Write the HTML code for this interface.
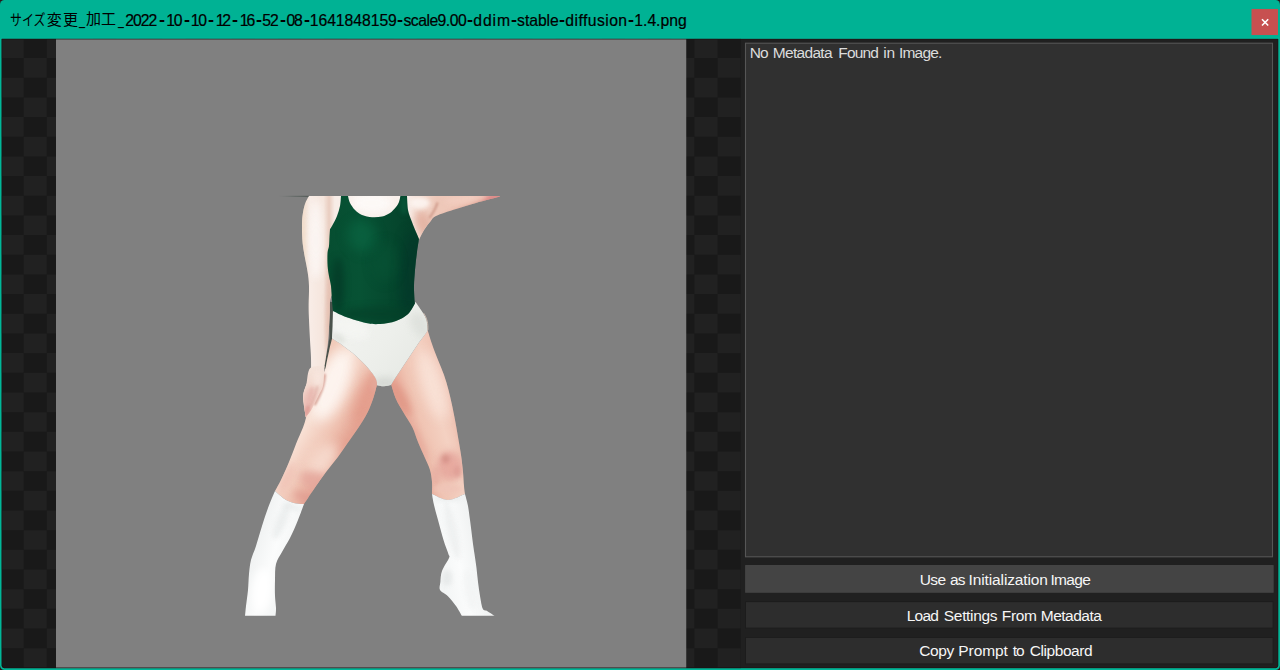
<!DOCTYPE html>
<html lang="ja"><head><meta charset="utf-8"><title>Image Viewer</title>
<style>
html,body{margin:0;padding:0;}
body{width:1280px;height:670px;overflow:hidden;background:#2a1719;position:relative;color:#000;
 font-family:"Liberation Sans","Noto Sans CJK JP",sans-serif;}
.fig{position:absolute;left:0;top:0;}
.t{position:absolute;white-space:pre;line-height:20px;margin:0;padding:0;}
.k{-webkit-text-stroke:0.2px #000;}
.g{position:absolute;left:0;top:0;width:0;height:0;font-size:15.5px;}
.ttl{font-size:15.75px;}
.meta{color:#dcdcdc;}
.btn{color:#f6f6f6;}
</style></head>
<body>

<svg class="fig" width="1280" height="670" viewBox="0 0 1280 670">
 <defs><clipPath id="cc"><path d="M1.5,38.75H1278.4V665.2a3,3 0 0 1 -3,3H4.5a3,3 0 0 1 -3,-3Z"/></clipPath></defs>
 <rect width="1280" height="670" fill="#2a1719"/>
 <rect width="1280" height="670" rx="4.5" fill="#00b294"/>
 <g clip-path="url(#cc)">
  <rect x="0" y="38" width="1280" height="632" fill="#202020"/>
  <rect x="0" y="38" width="741" height="632" fill="#191919"/>
  <path d="M0.55,48.23H741 M0.55,87.58H741 M0.55,126.92H741 M0.55,166.26H741 M0.55,205.60H741 M0.55,244.94H741 M0.55,284.28H741 M0.55,323.62H741 M0.55,362.95H741 M0.55,402.30H741 M0.55,441.63H741 M0.55,480.98H741 M0.55,520.32H741 M0.55,559.65H741 M0.55,599.00H741 M0.55,638.34H741" stroke="#212121" stroke-width="19.67" stroke-dasharray="23.13" fill="none"/>
  <path d="M0.55,67.91H741 M0.55,107.25H741 M0.55,146.59H741 M0.55,185.93H741 M0.55,225.27H741 M0.55,264.61H741 M0.55,303.94H741 M0.55,343.29H741 M0.55,382.62H741 M0.55,421.97H741 M0.55,461.31H741 M0.55,500.65H741 M0.55,539.99H741 M0.55,579.33H741 M0.55,618.67H741 M0.55,658.00H741" stroke="#212121" stroke-width="19.67" stroke-dasharray="23.13" stroke-dashoffset="23.13" fill="none"/>
  <rect x="56" y="38" width="630.25" height="632" fill="#808080"/>
  <rect x="745.5" y="43.2" width="527" height="513.6" fill="#303030" stroke="#565656" stroke-width="1.1"/>
  <rect x="745.2" y="565.1" width="528.4" height="27.6" fill="#494949"/><rect x="746" y="565.9" width="526.8" height="26" fill="#444"/>
  <rect x="745.1" y="601.2" width="528.4" height="27.3" fill="#1c1c1c"/><rect x="746" y="602.1" width="526.6" height="25.5" fill="#2d2d2d"/>
  <rect x="745.1" y="637" width="528.4" height="27.3" fill="#1c1c1c"/><rect x="746" y="637.9" width="526.6" height="25.5" fill="#2d2d2d"/>
 </g>
 <path d="M1.9,39.1H1278V665.2a2.6,2.6 0 0 1 -2.6,2.6H4.5a2.6,2.6 0 0 1 -2.6,-2.6Z" fill="none" stroke="#1f1013" stroke-width="0.8" opacity=".85"/>
 <path d="M1.1,38.3H1278.8V665.4a3.4,3.4 0 0 1 -3.4,3.4H4.5a3.4,3.4 0 0 1 -3.4,-3.4Z" fill="none" stroke="#00c6a4" stroke-width="0.8" opacity=".8"/>
 <rect x="1251.5" y="8.95" width="26.5" height="26.1" fill="#c75050"/>
 <path d="M1262,19.3 L1268.2,25.5 M1268.2,19.3 L1262,25.5" stroke="#fff" stroke-width="1.6" fill="none"/>
</svg>

<svg class="fig" width="1280" height="670" viewBox="0 0 1280 670">
<defs>
 <filter id="sf" color-interpolation-filters="sRGB" x="-5%" y="-5%" width="110%" height="110%"><feGaussianBlur stdDeviation="0.5"/></filter>
 <filter id="b1" color-interpolation-filters="sRGB" x="-100%" y="-100%" width="300%" height="300%"><feGaussianBlur stdDeviation="0.9"/></filter>
 <filter id="b2" color-interpolation-filters="sRGB" x="-100%" y="-100%" width="300%" height="300%"><feGaussianBlur stdDeviation="2"/></filter>
 <filter id="b3" color-interpolation-filters="sRGB" x="-100%" y="-100%" width="300%" height="300%"><feGaussianBlur stdDeviation="3.5"/></filter>
 <filter id="b5" color-interpolation-filters="sRGB" x="-100%" y="-100%" width="300%" height="300%"><feGaussianBlur stdDeviation="6"/></filter>
 <linearGradient id="gArm" x1="302" x2="345" y1="0" y2="0" gradientUnits="userSpaceOnUse">
  <stop offset="0" stop-color="#f1dfd2"/><stop offset=".2" stop-color="#f8ece6"/><stop offset=".5" stop-color="#f5e5dc"/><stop offset=".63" stop-color="#e9cdc0"/><stop offset=".76" stop-color="#f7ece6"/><stop offset="1" stop-color="#f8efea"/></linearGradient>
 <linearGradient id="gLine" x1="279" x2="309" y1="0" y2="0" gradientUnits="userSpaceOnUse"><stop offset="0" stop-color="#5a6660" stop-opacity="0"/><stop offset=".5" stop-color="#4a5650" stop-opacity=".6"/><stop offset="1" stop-color="#39453f" stop-opacity=".85"/></linearGradient>
 <linearGradient id="gHand" x1="0" x2="0" y1="366" y2="417" gradientUnits="userSpaceOnUse">
  <stop offset="0" stop-color="#f5e5dc"/><stop offset=".3" stop-color="#f4dcd2"/><stop offset="1" stop-color="#efc7bd"/></linearGradient>
 <linearGradient id="gTorso" x1="330" x2="500" y1="0" y2="0" gradientUnits="userSpaceOnUse">
  <stop offset="0" stop-color="#f8efea"/><stop offset=".45" stop-color="#faf1ec"/><stop offset=".53" stop-color="#f2d8cc"/><stop offset=".63" stop-color="#eec8b9"/><stop offset=".82" stop-color="#f0c8b9"/><stop offset="1" stop-color="#de9690"/></linearGradient>
 <linearGradient id="gLeo" x1="328" x2="420" y1="0" y2="0" gradientUnits="userSpaceOnUse">
  <stop offset="0" stop-color="#064e31"/><stop offset=".35" stop-color="#075234"/><stop offset=".75" stop-color="#05462d"/><stop offset="1" stop-color="#043d28"/></linearGradient>
 <linearGradient id="gPants" x1="331" x2="428" y1="310" y2="386" gradientUnits="userSpaceOnUse">
  <stop offset="0" stop-color="#f3f4f1"/><stop offset=".5" stop-color="#edefeb"/><stop offset="1" stop-color="#e4e7e2"/></linearGradient>
 <linearGradient id="gThL" x1="300" x2="352" y1="400" y2="432" gradientUnits="userSpaceOnUse">
  <stop offset="0" stop-color="#f1cab9"/><stop offset=".3" stop-color="#f8e0d4"/><stop offset=".65" stop-color="#f1c8b8"/><stop offset="1" stop-color="#e7a896"/></linearGradient>
 <linearGradient id="gThR" x1="404" x2="458" y1="424" y2="408" gradientUnits="userSpaceOnUse">
  <stop offset="0" stop-color="#e7a695"/><stop offset=".3" stop-color="#f0c4b3"/><stop offset=".65" stop-color="#f4d1c2"/><stop offset="1" stop-color="#eec0b0"/></linearGradient>
 <linearGradient id="gBL" x1="250" x2="290" y1="560" y2="572" gradientUnits="userSpaceOnUse">
  <stop offset="0" stop-color="#f0f2f2"/><stop offset=".5" stop-color="#fbfcfc"/><stop offset="1" stop-color="#f2f4f4"/></linearGradient>
 <linearGradient id="gBR" x1="438" x2="478" y1="560" y2="552" gradientUnits="userSpaceOnUse">
  <stop offset="0" stop-color="#f3f5f5"/><stop offset=".5" stop-color="#fbfcfc"/><stop offset="1" stop-color="#f0f2f2"/></linearGradient>
</defs>
<g filter="url(#sf)">
 <path d="M279,196.3 L309,196.3" stroke="url(#gLine)" stroke-width="0.9"/>
 <clipPath id="cto"><path d="M330.0,196.0 C358.3,196.0 471.7,196.0 500.0,196.0 C500.0,196.1 500.0,196.5 500.0,196.6 C496.0,197.7 483.3,200.9 476.0,203.0 C468.7,205.1 462.7,206.8 456.0,209.0 C449.3,211.2 440.3,213.8 436.0,216.0 C431.7,218.2 432.0,219.7 430.0,222.0 C428.0,224.3 425.8,227.2 424.0,230.0 C422.2,232.8 420.2,237.5 419.5,239.0 C417.9,241.2 411.6,249.8 410.0,252.0 C396.7,251.7 343.3,250.3 330.0,250.0 C330.0,241.0 330.0,205.0 330.0,196.0Z"/></clipPath><path d="M330.0,196.0 C358.3,196.0 471.7,196.0 500.0,196.0 C500.0,196.1 500.0,196.5 500.0,196.6 C496.0,197.7 483.3,200.9 476.0,203.0 C468.7,205.1 462.7,206.8 456.0,209.0 C449.3,211.2 440.3,213.8 436.0,216.0 C431.7,218.2 432.0,219.7 430.0,222.0 C428.0,224.3 425.8,227.2 424.0,230.0 C422.2,232.8 420.2,237.5 419.5,239.0 C417.9,241.2 411.6,249.8 410.0,252.0 C396.7,251.7 343.3,250.3 330.0,250.0 C330.0,241.0 330.0,205.0 330.0,196.0Z" fill="url(#gTorso)"/><g clip-path="url(#cto)"><ellipse cx="424" cy="224" rx="8" ry="14" fill="#e4b3a3" opacity="0.95" filter="url(#b3)" transform="rotate(-20 424 224)"/><ellipse cx="372" cy="203" rx="20" ry="10" fill="#fdfaf8" opacity="0.9" filter="url(#b3)" transform="rotate(0 372 203)"/><ellipse cx="420" cy="203" rx="10" ry="6" fill="#fcf5f1" opacity="0.9" filter="url(#b2)" transform="rotate(0 420 203)"/><ellipse cx="468" cy="209" rx="30" ry="3" fill="#d99888" opacity="0.9" filter="url(#b2)" transform="rotate(-19 468 209)"/><ellipse cx="492" cy="198" rx="10" ry="3" fill="#dc8686" opacity="0.9" filter="url(#b2)" transform="rotate(-22 492 198)"/><ellipse cx="465" cy="199" rx="22" ry="3" fill="#f3cfc2" opacity="0.8" filter="url(#b2)" transform="rotate(-8 465 199)"/><path d="M437.5,202.5 C436,208 433,213 429.5,218" stroke="#c48b7b" stroke-width="2" fill="none" opacity=".8" filter="url(#b1)"/></g>
 <path d="M331.3,302 L331.2,338 C329.5,350 327,360 325,369" stroke="#4a524b" stroke-width="3.4" fill="none"/>
 <clipPath id="car"><path d="M309.0,196.0 C308.3,197.3 306.1,200.7 305.0,204.0 C303.9,207.3 303.0,212.3 302.5,216.0 C302.0,219.7 302.1,222.7 302.0,226.0 C301.9,229.3 302.0,232.7 302.2,236.0 C302.4,239.3 302.5,242.3 303.0,246.0 C303.5,249.7 304.2,253.7 305.0,258.0 C305.8,262.3 306.9,267.3 307.6,272.0 C308.3,276.7 308.8,280.3 309.0,286.0 C309.2,291.7 308.6,300.3 308.6,306.0 C308.6,311.7 308.8,314.3 309.0,320.0 C309.2,325.7 309.7,333.7 310.0,340.0 C310.3,346.3 310.9,352.2 311.0,358.0 C311.1,363.8 311.3,370.4 310.5,375.0 C309.7,379.6 307.2,382.0 306.0,385.5 C304.8,389.0 303.3,392.2 303.0,396.0 C302.7,399.8 303.8,404.3 304.3,408.0 C304.8,411.7 305.7,416.3 306.0,418.0 C306.7,417.0 308.8,414.2 310.0,412.0 C311.2,409.8 311.8,407.9 313.5,405.0 C315.2,402.1 318.3,398.5 320.0,394.5 C321.7,390.5 322.9,385.2 323.6,381.0 C324.3,376.8 323.8,373.0 324.2,369.0 C324.6,365.0 325.4,361.5 326.0,357.0 C326.6,352.5 327.5,347.0 328.0,342.0 C328.5,337.0 328.7,332.0 329.0,327.0 C329.3,322.0 329.6,316.5 329.8,312.0 C330.0,307.5 329.5,303.7 330.2,300.0 C330.9,296.3 333.4,291.7 334.0,290.0 C335.8,280.3 343.2,241.7 345.0,232.0 C344.9,226.0 344.6,202.0 344.5,196.0 C338.6,196.0 314.9,196.0 309.0,196.0Z"/></clipPath><path d="M309.0,196.0 C308.3,197.3 306.1,200.7 305.0,204.0 C303.9,207.3 303.0,212.3 302.5,216.0 C302.0,219.7 302.1,222.7 302.0,226.0 C301.9,229.3 302.0,232.7 302.2,236.0 C302.4,239.3 302.5,242.3 303.0,246.0 C303.5,249.7 304.2,253.7 305.0,258.0 C305.8,262.3 306.9,267.3 307.6,272.0 C308.3,276.7 308.8,280.3 309.0,286.0 C309.2,291.7 308.6,300.3 308.6,306.0 C308.6,311.7 308.8,314.3 309.0,320.0 C309.2,325.7 309.7,333.7 310.0,340.0 C310.3,346.3 310.9,352.2 311.0,358.0 C311.1,363.8 311.3,370.4 310.5,375.0 C309.7,379.6 307.2,382.0 306.0,385.5 C304.8,389.0 303.3,392.2 303.0,396.0 C302.7,399.8 303.8,404.3 304.3,408.0 C304.8,411.7 305.7,416.3 306.0,418.0 C306.7,417.0 308.8,414.2 310.0,412.0 C311.2,409.8 311.8,407.9 313.5,405.0 C315.2,402.1 318.3,398.5 320.0,394.5 C321.7,390.5 322.9,385.2 323.6,381.0 C324.3,376.8 323.8,373.0 324.2,369.0 C324.6,365.0 325.4,361.5 326.0,357.0 C326.6,352.5 327.5,347.0 328.0,342.0 C328.5,337.0 328.7,332.0 329.0,327.0 C329.3,322.0 329.6,316.5 329.8,312.0 C330.0,307.5 329.5,303.7 330.2,300.0 C330.9,296.3 333.4,291.7 334.0,290.0 C335.8,280.3 343.2,241.7 345.0,232.0 C344.9,226.0 344.6,202.0 344.5,196.0 C338.6,196.0 314.9,196.0 309.0,196.0Z" fill="url(#gArm)"/><g clip-path="url(#car)"><ellipse cx="303" cy="250" rx="3" ry="60" fill="#f2dcc8" opacity="0.8" filter="url(#b2)" transform="rotate(0 303 250)"/><ellipse cx="330" cy="300" rx="3.5" ry="50" fill="#e4bfb0" opacity="0.9" filter="url(#b2)" transform="rotate(2 330 300)"/><ellipse cx="311" cy="400" rx="7" ry="14" fill="#ecbfb6" opacity="0.9" filter="url(#b3)" transform="rotate(20 311 400)"/><ellipse cx="307" cy="412" rx="4" ry="7" fill="#e3a49c" opacity="0.9" filter="url(#b2)" transform="rotate(20 307 412)"/><ellipse cx="316" cy="240" rx="7" ry="40" fill="#fcf8f6" opacity="0.8" filter="url(#b3)" transform="rotate(0 316 240)"/></g>
 <clipPath id="ctr"><path d="M427.6,330.0 C428.3,332.3 430.3,339.0 432.0,344.0 C433.7,349.0 436.0,354.8 438.0,360.0 C440.0,365.2 442.2,370.0 444.0,375.0 C445.8,380.0 447.2,385.0 448.5,390.0 C449.8,395.0 450.9,400.0 452.0,405.0 C453.1,410.0 454.0,414.7 455.0,420.0 C456.0,425.3 457.0,431.2 458.0,437.0 C459.0,442.8 460.2,449.2 461.0,455.0 C461.8,460.8 462.5,466.8 463.0,472.0 C463.5,477.2 463.7,482.3 464.0,486.0 C464.3,489.7 464.8,492.7 465.0,494.0 C462.2,495.0 453.5,500.0 448.0,500.0 C442.5,500.0 434.7,495.0 432.0,494.0 C432.0,492.0 432.3,486.0 432.0,482.0 C431.7,478.0 431.2,474.0 430.0,470.0 C428.8,466.0 427.0,462.7 425.0,458.0 C423.0,453.3 420.1,447.1 418.0,442.0 C415.9,436.9 414.9,432.4 412.5,427.5 C410.1,422.6 406.2,417.2 403.5,412.5 C400.8,407.8 398.0,403.6 396.0,399.0 C394.0,394.4 392.1,387.3 391.3,385.0 C391.8,384.2 392.2,382.8 394.0,380.0 C395.8,377.2 399.3,372.0 402.0,368.0 C404.7,364.0 407.3,360.0 410.0,356.0 C412.7,352.0 415.3,347.8 418.0,344.0 C420.7,340.2 424.4,335.3 426.0,333.0 C427.6,330.7 427.3,330.5 427.6,330.0Z"/></clipPath><path d="M427.6,330.0 C428.3,332.3 430.3,339.0 432.0,344.0 C433.7,349.0 436.0,354.8 438.0,360.0 C440.0,365.2 442.2,370.0 444.0,375.0 C445.8,380.0 447.2,385.0 448.5,390.0 C449.8,395.0 450.9,400.0 452.0,405.0 C453.1,410.0 454.0,414.7 455.0,420.0 C456.0,425.3 457.0,431.2 458.0,437.0 C459.0,442.8 460.2,449.2 461.0,455.0 C461.8,460.8 462.5,466.8 463.0,472.0 C463.5,477.2 463.7,482.3 464.0,486.0 C464.3,489.7 464.8,492.7 465.0,494.0 C462.2,495.0 453.5,500.0 448.0,500.0 C442.5,500.0 434.7,495.0 432.0,494.0 C432.0,492.0 432.3,486.0 432.0,482.0 C431.7,478.0 431.2,474.0 430.0,470.0 C428.8,466.0 427.0,462.7 425.0,458.0 C423.0,453.3 420.1,447.1 418.0,442.0 C415.9,436.9 414.9,432.4 412.5,427.5 C410.1,422.6 406.2,417.2 403.5,412.5 C400.8,407.8 398.0,403.6 396.0,399.0 C394.0,394.4 392.1,387.3 391.3,385.0 C391.8,384.2 392.2,382.8 394.0,380.0 C395.8,377.2 399.3,372.0 402.0,368.0 C404.7,364.0 407.3,360.0 410.0,356.0 C412.7,352.0 415.3,347.8 418.0,344.0 C420.7,340.2 424.4,335.3 426.0,333.0 C427.6,330.7 427.3,330.5 427.6,330.0Z" fill="url(#gThR)"/><g clip-path="url(#ctr)"><ellipse cx="433" cy="385" rx="11" ry="36" fill="#f9e2d7" opacity="0.9" filter="url(#b5)" transform="rotate(-18 433 385)"/><ellipse cx="400" cy="398" rx="6" ry="20" fill="#e09786" opacity="0.9" filter="url(#b3)" transform="rotate(-28 400 398)"/><ellipse cx="418" cy="440" rx="4" ry="24" fill="#e3a294" opacity="0.5" filter="url(#b3)" transform="rotate(-28 418 440)"/><ellipse cx="450" cy="466" rx="13" ry="15" fill="#e5a59b" opacity="0.85" filter="url(#b3)" transform="rotate(0 450 466)"/><ellipse cx="445.5" cy="459" rx="4" ry="4.5" fill="#cc847c" opacity="0.6" filter="url(#b2)" transform="rotate(0 445.5 459)"/><ellipse cx="457.5" cy="472" rx="3.5" ry="6" fill="#d68f88" opacity="0.5" filter="url(#b2)" transform="rotate(0 457.5 472)"/><ellipse cx="436" cy="476" rx="5" ry="10" fill="#e6ada1" opacity="0.7" filter="url(#b2)" transform="rotate(0 436 476)"/><ellipse cx="460" cy="425" rx="3.5" ry="40" fill="#e9b0a2" opacity="0.7" filter="url(#b2)" transform="rotate(-9 460 425)"/><ellipse cx="448" cy="489" rx="14" ry="5" fill="#efc4b7" opacity="0.85" filter="url(#b2)" transform="rotate(0 448 489)"/></g>
 <clipPath id="ctl"><path d="M332.0,338.6 C333.7,339.7 338.0,342.1 342.0,345.0 C346.0,347.9 351.7,352.2 356.0,356.0 C360.3,359.8 364.7,364.2 368.0,368.0 C371.3,371.8 374.6,376.1 376.0,379.0 C377.4,381.9 376.6,384.4 376.7,385.5 C376.2,387.5 375.0,393.0 373.5,397.5 C372.0,402.0 370.0,407.5 367.5,412.5 C365.0,417.5 361.8,422.5 358.5,427.5 C355.2,432.5 351.5,437.5 348.0,442.5 C344.5,447.5 341.2,452.6 337.5,457.5 C333.8,462.4 329.6,467.2 326.0,472.0 C322.4,476.8 319.7,480.7 316.0,486.0 C312.3,491.3 306.0,501.0 304.0,504.0 C302.7,503.9 299.0,504.3 296.0,503.6 C293.0,502.9 289.5,502.1 286.0,500.0 C282.5,497.9 276.8,492.5 275.0,491.0 C276.0,489.2 278.7,484.8 281.0,480.0 C283.3,475.2 286.5,468.0 289.0,462.0 C291.5,456.0 293.7,449.8 296.0,444.0 C298.3,438.2 301.3,431.9 303.0,427.5 C304.7,423.1 305.1,420.8 306.0,417.7 C306.9,414.6 307.3,412.4 308.5,409.0 C309.7,405.6 311.3,401.2 313.0,397.0 C314.7,392.8 316.5,388.4 318.5,384.0 C320.5,379.6 323.4,374.6 324.8,370.6 C326.2,366.6 326.4,363.5 327.1,360.0 C327.9,356.5 328.5,353.3 329.3,349.7 C330.1,346.1 331.6,340.5 332.0,338.6Z"/></clipPath><path d="M332.0,338.6 C333.7,339.7 338.0,342.1 342.0,345.0 C346.0,347.9 351.7,352.2 356.0,356.0 C360.3,359.8 364.7,364.2 368.0,368.0 C371.3,371.8 374.6,376.1 376.0,379.0 C377.4,381.9 376.6,384.4 376.7,385.5 C376.2,387.5 375.0,393.0 373.5,397.5 C372.0,402.0 370.0,407.5 367.5,412.5 C365.0,417.5 361.8,422.5 358.5,427.5 C355.2,432.5 351.5,437.5 348.0,442.5 C344.5,447.5 341.2,452.6 337.5,457.5 C333.8,462.4 329.6,467.2 326.0,472.0 C322.4,476.8 319.7,480.7 316.0,486.0 C312.3,491.3 306.0,501.0 304.0,504.0 C302.7,503.9 299.0,504.3 296.0,503.6 C293.0,502.9 289.5,502.1 286.0,500.0 C282.5,497.9 276.8,492.5 275.0,491.0 C276.0,489.2 278.7,484.8 281.0,480.0 C283.3,475.2 286.5,468.0 289.0,462.0 C291.5,456.0 293.7,449.8 296.0,444.0 C298.3,438.2 301.3,431.9 303.0,427.5 C304.7,423.1 305.1,420.8 306.0,417.7 C306.9,414.6 307.3,412.4 308.5,409.0 C309.7,405.6 311.3,401.2 313.0,397.0 C314.7,392.8 316.5,388.4 318.5,384.0 C320.5,379.6 323.4,374.6 324.8,370.6 C326.2,366.6 326.4,363.5 327.1,360.0 C327.9,356.5 328.5,353.3 329.3,349.7 C330.1,346.1 331.6,340.5 332.0,338.6Z" fill="url(#gThL)"/><g clip-path="url(#ctl)"><ellipse cx="332" cy="385" rx="15" ry="38" fill="#fdf5f0" opacity="0.95" filter="url(#b5)" transform="rotate(22 332 385)"/><ellipse cx="366" cy="398" rx="8" ry="30" fill="#e39a89" opacity="0.9" filter="url(#b5)" transform="rotate(22 366 398)"/><ellipse cx="352" cy="440" rx="6" ry="26" fill="#e39e90" opacity="0.5" filter="url(#b5)" transform="rotate(35 352 440)"/><ellipse cx="322" cy="462" rx="12" ry="22" fill="#f8e0d4" opacity="0.8" filter="url(#b5)" transform="rotate(35 322 462)"/><ellipse cx="318" cy="483" rx="19" ry="10" fill="#e4a59a" opacity="0.8" filter="url(#b3)" transform="rotate(25 318 483)"/><ellipse cx="306" cy="498" rx="14" ry="5" fill="#dd978d" opacity="0.7" filter="url(#b3)" transform="rotate(25 306 498)"/><ellipse cx="287" cy="478" rx="5" ry="16" fill="#efc0b3" opacity="0.8" filter="url(#b3)" transform="rotate(25 287 478)"/><ellipse cx="376" cy="384" rx="5" ry="8" fill="#e4a99b" opacity="0.7" filter="url(#b2)" transform="rotate(0 376 384)"/></g>
 <path d="M324.6,374 C324.4,382 322.5,389 318.8,396.5 L314.5,405" stroke="#cf8f82" stroke-width="2.6" fill="none" opacity=".8" filter="url(#b1)"/>
 <clipPath id="cha"><path d="M310.3,368.0 C307.3,371.0 307.5,379.7 306.4,384.0 C305.2,388.3 303.8,390.6 303.4,394.0 C303.0,397.4 303.8,400.7 304.2,404.6 C304.6,408.5 305.4,415.2 305.7,417.3 C306.6,416.2 309.5,412.7 310.9,410.6 C312.3,408.5 312.6,407.1 313.9,404.6 C315.1,402.1 316.9,398.7 318.4,395.7 C319.9,392.7 321.9,390.0 322.8,386.7 C323.7,383.4 323.6,379.4 323.9,376.0 C324.2,372.6 324.3,367.7 324.4,366.0 C322.0,366.3 313.3,365.0 310.3,368.0Z"/></clipPath><path d="M310.3,368.0 C307.3,371.0 307.5,379.7 306.4,384.0 C305.2,388.3 303.8,390.6 303.4,394.0 C303.0,397.4 303.8,400.7 304.2,404.6 C304.6,408.5 305.4,415.2 305.7,417.3 C306.6,416.2 309.5,412.7 310.9,410.6 C312.3,408.5 312.6,407.1 313.9,404.6 C315.1,402.1 316.9,398.7 318.4,395.7 C319.9,392.7 321.9,390.0 322.8,386.7 C323.7,383.4 323.6,379.4 323.9,376.0 C324.2,372.6 324.3,367.7 324.4,366.0 C322.0,366.3 313.3,365.0 310.3,368.0Z" fill="url(#gHand)"/><g clip-path="url(#cha)"><ellipse cx="309" cy="398" rx="5" ry="12" fill="#eab9b1" opacity="0.8" filter="url(#b2)" transform="rotate(18 309 398)"/><ellipse cx="307" cy="411" rx="3" ry="6" fill="#e09f98" opacity="0.9" filter="url(#b1)" transform="rotate(20 307 411)"/><ellipse cx="318" cy="378" rx="5" ry="8" fill="#f7e6de" opacity="0.8" filter="url(#b2)" transform="rotate(0 318 378)"/><path d="M317.5,386 C316,393 313.5,399 310.5,406" stroke="#d49890" stroke-width="1.1" fill="none" opacity=".8" filter="url(#b1)"/><path d="M312.5,388 C311,394 309.5,400 307.8,407" stroke="#dda79f" stroke-width="0.9" fill="none" opacity=".6" filter="url(#b1)"/></g>
 <clipPath id="cpa"><path d="M333.0,310.0 C335.2,311.0 343.8,315.0 346.0,316.0 C349.3,317.0 362.7,321.0 366.0,322.0 C368.3,322.2 377.7,322.8 380.0,323.0 C382.7,322.5 393.3,320.5 396.0,320.0 C398.0,318.8 406.0,314.2 408.0,313.0 C409.2,311.2 414.2,303.8 415.5,302.0 C416.8,303.8 421.2,310.0 423.0,313.0 C424.8,316.0 425.7,317.2 426.5,320.0 C427.3,322.8 427.4,328.3 427.6,330.0 C427.3,330.5 427.6,330.7 426.0,333.0 C424.4,335.3 420.7,340.2 418.0,344.0 C415.3,347.8 412.7,352.0 410.0,356.0 C407.3,360.0 404.7,364.0 402.0,368.0 C399.3,372.0 395.8,377.2 394.0,380.0 C392.2,382.8 391.5,384.2 391.0,385.0 C389.8,385.2 386.3,386.2 384.0,386.3 C381.7,386.4 378.2,385.5 377.0,385.3 C376.8,384.2 377.5,381.9 376.0,379.0 C374.5,376.1 371.3,371.8 368.0,368.0 C364.7,364.2 360.3,359.8 356.0,356.0 C351.7,352.2 346.0,347.9 342.0,345.0 C338.0,342.1 333.7,339.7 332.0,338.6 C332.1,336.5 332.4,330.8 332.6,326.0 C332.8,321.2 332.9,312.7 333.0,310.0Z"/></clipPath><path d="M333.0,310.0 C335.2,311.0 343.8,315.0 346.0,316.0 C349.3,317.0 362.7,321.0 366.0,322.0 C368.3,322.2 377.7,322.8 380.0,323.0 C382.7,322.5 393.3,320.5 396.0,320.0 C398.0,318.8 406.0,314.2 408.0,313.0 C409.2,311.2 414.2,303.8 415.5,302.0 C416.8,303.8 421.2,310.0 423.0,313.0 C424.8,316.0 425.7,317.2 426.5,320.0 C427.3,322.8 427.4,328.3 427.6,330.0 C427.3,330.5 427.6,330.7 426.0,333.0 C424.4,335.3 420.7,340.2 418.0,344.0 C415.3,347.8 412.7,352.0 410.0,356.0 C407.3,360.0 404.7,364.0 402.0,368.0 C399.3,372.0 395.8,377.2 394.0,380.0 C392.2,382.8 391.5,384.2 391.0,385.0 C389.8,385.2 386.3,386.2 384.0,386.3 C381.7,386.4 378.2,385.5 377.0,385.3 C376.8,384.2 377.5,381.9 376.0,379.0 C374.5,376.1 371.3,371.8 368.0,368.0 C364.7,364.2 360.3,359.8 356.0,356.0 C351.7,352.2 346.0,347.9 342.0,345.0 C338.0,342.1 333.7,339.7 332.0,338.6 C332.1,336.5 332.4,330.8 332.6,326.0 C332.8,321.2 332.9,312.7 333.0,310.0Z" fill="url(#gPants)"/><g clip-path="url(#cpa)"><ellipse cx="385" cy="383" rx="12" ry="6" fill="#d4d7d2" opacity="0.9" filter="url(#b3)" transform="rotate(0 385 383)"/><ellipse cx="420" cy="325" rx="8" ry="14" fill="#dcdfda" opacity="0.8" filter="url(#b3)" transform="rotate(-30 420 325)"/><ellipse cx="352" cy="328" rx="18" ry="10" fill="#f4f5f2" opacity="0.9" filter="url(#b3)" transform="rotate(25 352 328)"/><ellipse cx="338" cy="338" rx="8" ry="4" fill="#d9dcd6" opacity="0.6" filter="url(#b2)" transform="rotate(30 338 338)"/></g>
 <path d="M423.5,313 C427,318 428.3,324 427.8,330" stroke="#c9b9ae" stroke-width="1" fill="none"/>
 <clipPath id="cle"><path d="M341.0,196.0 C342.2,196.0 346.8,196.0 348.0,196.0 C348.3,197.2 348.8,200.7 350.0,203.0 C351.2,205.3 353.0,208.0 355.0,210.0 C357.0,212.0 359.2,213.8 362.0,215.0 C364.8,216.2 368.7,216.9 372.0,217.2 C375.3,217.4 379.0,217.2 382.0,216.5 C385.0,215.8 387.7,214.6 390.0,213.0 C392.3,211.4 394.5,208.8 396.0,207.0 C397.5,205.2 398.3,203.8 399.0,202.0 C399.7,200.2 400.2,197.0 400.4,196.0 C401.5,196.0 405.9,196.0 407.0,196.0 C407.2,198.3 407.2,205.7 408.0,210.0 C408.8,214.3 410.7,218.3 412.0,222.0 C413.3,225.7 414.8,229.2 416.0,232.0 C417.2,234.8 418.5,237.8 419.0,239.0 C418.7,241.2 417.7,246.8 417.0,252.0 C416.3,257.2 415.5,264.3 415.0,270.0 C414.5,275.7 414.1,280.8 414.0,286.0 C413.9,291.2 414.4,298.1 414.6,301.0 C414.8,303.9 414.9,303.1 415.0,303.5 C413.8,305.2 411.2,311.1 408.0,314.0 C404.8,316.9 400.7,319.3 396.0,321.0 C391.3,322.7 385.0,323.7 380.0,324.0 C375.0,324.3 371.7,324.2 366.0,323.0 C360.3,321.8 351.5,319.0 346.0,317.0 C340.5,315.0 335.2,312.0 333.0,311.0 C332.8,309.2 332.3,304.2 332.0,300.0 C331.7,295.8 331.5,290.0 331.0,286.0 C330.5,282.0 329.6,279.3 329.0,276.0 C328.4,272.7 327.9,269.8 327.6,266.0 C327.4,262.2 327.3,256.3 327.5,253.0 C327.7,249.7 328.7,248.8 329.0,246.0 C329.3,243.2 329.3,238.8 329.5,236.0 C329.7,233.2 329.9,230.2 330.0,229.0 C330.3,228.5 330.8,228.2 332.0,226.0 C333.2,223.8 335.7,219.3 337.0,216.0 C338.3,212.7 339.3,209.3 340.0,206.0 C340.7,202.7 340.8,197.7 341.0,196.0Z"/></clipPath><path d="M341.0,196.0 C342.2,196.0 346.8,196.0 348.0,196.0 C348.3,197.2 348.8,200.7 350.0,203.0 C351.2,205.3 353.0,208.0 355.0,210.0 C357.0,212.0 359.2,213.8 362.0,215.0 C364.8,216.2 368.7,216.9 372.0,217.2 C375.3,217.4 379.0,217.2 382.0,216.5 C385.0,215.8 387.7,214.6 390.0,213.0 C392.3,211.4 394.5,208.8 396.0,207.0 C397.5,205.2 398.3,203.8 399.0,202.0 C399.7,200.2 400.2,197.0 400.4,196.0 C401.5,196.0 405.9,196.0 407.0,196.0 C407.2,198.3 407.2,205.7 408.0,210.0 C408.8,214.3 410.7,218.3 412.0,222.0 C413.3,225.7 414.8,229.2 416.0,232.0 C417.2,234.8 418.5,237.8 419.0,239.0 C418.7,241.2 417.7,246.8 417.0,252.0 C416.3,257.2 415.5,264.3 415.0,270.0 C414.5,275.7 414.1,280.8 414.0,286.0 C413.9,291.2 414.4,298.1 414.6,301.0 C414.8,303.9 414.9,303.1 415.0,303.5 C413.8,305.2 411.2,311.1 408.0,314.0 C404.8,316.9 400.7,319.3 396.0,321.0 C391.3,322.7 385.0,323.7 380.0,324.0 C375.0,324.3 371.7,324.2 366.0,323.0 C360.3,321.8 351.5,319.0 346.0,317.0 C340.5,315.0 335.2,312.0 333.0,311.0 C332.8,309.2 332.3,304.2 332.0,300.0 C331.7,295.8 331.5,290.0 331.0,286.0 C330.5,282.0 329.6,279.3 329.0,276.0 C328.4,272.7 327.9,269.8 327.6,266.0 C327.4,262.2 327.3,256.3 327.5,253.0 C327.7,249.7 328.7,248.8 329.0,246.0 C329.3,243.2 329.3,238.8 329.5,236.0 C329.7,233.2 329.9,230.2 330.0,229.0 C330.3,228.5 330.8,228.2 332.0,226.0 C333.2,223.8 335.7,219.3 337.0,216.0 C338.3,212.7 339.3,209.3 340.0,206.0 C340.7,202.7 340.8,197.7 341.0,196.0Z" fill="url(#gLeo)"/><g clip-path="url(#cle)"><ellipse cx="362" cy="236" rx="14" ry="16" fill="#0b6643" opacity="0.7" filter="url(#b5)" transform="rotate(-20 362 236)"/><ellipse cx="410" cy="275" rx="9" ry="45" fill="#04382a" opacity="0.8" filter="url(#b5)" transform="rotate(3 410 275)"/><ellipse cx="338" cy="285" rx="6" ry="28" fill="#043a27" opacity="0.8" filter="url(#b3)" transform="rotate(0 338 285)"/><ellipse cx="380" cy="314" rx="40" ry="7" fill="#054029" opacity="0.7" filter="url(#b3)" transform="rotate(0 380 314)"/><ellipse cx="385" cy="262" rx="12" ry="20" fill="#095939" opacity="0.4" filter="url(#b5)" transform="rotate(0 385 262)"/><ellipse cx="404" cy="205" rx="4" ry="10" fill="#0b6040" opacity="0.6" filter="url(#b2)" transform="rotate(0 404 205)"/></g>
 <clipPath id="cbl"><path d="M275.0,491.0 C276.8,492.5 282.5,497.9 286.0,500.0 C289.5,502.1 293.0,502.9 296.0,503.6 C299.0,504.3 302.7,503.9 304.0,504.0 C303.0,506.7 300.3,514.3 298.0,520.0 C295.7,525.7 292.7,532.7 290.0,538.0 C287.3,543.3 284.3,547.7 282.0,552.0 C279.7,556.3 277.2,559.3 276.0,564.0 C274.8,568.7 275.2,574.7 275.0,580.0 C274.8,585.3 274.8,591.3 275.0,596.0 C275.2,600.7 275.9,604.7 276.0,608.0 C276.1,611.3 275.6,614.5 275.5,615.8 C270.4,615.8 250.1,615.8 245.0,615.8 C245.2,614.2 245.5,610.3 246.0,606.0 C246.5,601.7 247.5,595.3 248.0,590.0 C248.5,584.7 248.5,579.0 249.0,574.0 C249.5,569.0 249.8,564.7 251.0,560.0 C252.2,555.3 254.2,551.7 256.0,546.0 C257.8,540.3 260.0,532.3 262.0,526.0 C264.0,519.7 265.8,513.8 268.0,508.0 C270.2,502.2 273.8,493.8 275.0,491.0Z"/></clipPath><path d="M275.0,491.0 C276.8,492.5 282.5,497.9 286.0,500.0 C289.5,502.1 293.0,502.9 296.0,503.6 C299.0,504.3 302.7,503.9 304.0,504.0 C303.0,506.7 300.3,514.3 298.0,520.0 C295.7,525.7 292.7,532.7 290.0,538.0 C287.3,543.3 284.3,547.7 282.0,552.0 C279.7,556.3 277.2,559.3 276.0,564.0 C274.8,568.7 275.2,574.7 275.0,580.0 C274.8,585.3 274.8,591.3 275.0,596.0 C275.2,600.7 275.9,604.7 276.0,608.0 C276.1,611.3 275.6,614.5 275.5,615.8 C270.4,615.8 250.1,615.8 245.0,615.8 C245.2,614.2 245.5,610.3 246.0,606.0 C246.5,601.7 247.5,595.3 248.0,590.0 C248.5,584.7 248.5,579.0 249.0,574.0 C249.5,569.0 249.8,564.7 251.0,560.0 C252.2,555.3 254.2,551.7 256.0,546.0 C257.8,540.3 260.0,532.3 262.0,526.0 C264.0,519.7 265.8,513.8 268.0,508.0 C270.2,502.2 273.8,493.8 275.0,491.0Z" fill="url(#gBL)"/><g clip-path="url(#cbl)"><ellipse cx="282" cy="520" rx="5" ry="20" fill="#e9ecec" opacity="0.8" filter="url(#b2)" transform="rotate(22 282 520)"/><ellipse cx="262" cy="590" rx="10" ry="22" fill="#ffffff" opacity="0.9" filter="url(#b3)" transform="rotate(5 262 590)"/><ellipse cx="292" cy="507" rx="10" ry="3" fill="#e6e9e9" opacity="0.6" filter="url(#b2)" transform="rotate(15 292 507)"/></g>
 <clipPath id="cbr"><path d="M432.0,494.0 C434.7,495.0 442.5,500.0 448.0,500.0 C453.5,500.0 462.2,495.0 465.0,494.0 C465.5,496.0 467.2,501.7 468.0,506.0 C468.8,510.3 469.2,514.3 470.0,520.0 C470.8,525.7 471.8,534.3 472.5,540.0 C473.2,545.7 473.8,549.3 474.5,554.0 C475.2,558.7 475.9,563.3 476.5,568.0 C477.1,572.7 477.4,577.3 478.0,582.0 C478.6,586.7 479.2,591.5 480.0,596.0 C480.8,600.5 481.6,606.3 482.8,608.8 C484.0,611.3 485.0,609.8 487.0,611.0 C489.0,612.2 493.4,615.0 494.7,615.8 C489.2,615.8 467.3,615.8 461.8,615.8 C460.8,614.2 458.4,609.3 456.0,606.0 C453.6,602.7 450.4,598.7 447.7,596.0 C445.0,593.3 441.2,592.3 440.0,590.0 C438.8,587.7 440.1,585.2 440.4,582.0 C440.7,578.8 440.6,575.0 442.0,571.0 C443.4,567.0 447.9,560.8 449.0,558.0 C450.1,555.2 449.3,557.0 448.4,554.0 C447.5,551.0 445.2,545.7 443.5,540.0 C441.8,534.3 439.6,525.8 438.0,520.0 C436.4,514.2 435.0,509.3 434.0,505.0 C433.0,500.7 432.3,495.8 432.0,494.0Z"/></clipPath><path d="M432.0,494.0 C434.7,495.0 442.5,500.0 448.0,500.0 C453.5,500.0 462.2,495.0 465.0,494.0 C465.5,496.0 467.2,501.7 468.0,506.0 C468.8,510.3 469.2,514.3 470.0,520.0 C470.8,525.7 471.8,534.3 472.5,540.0 C473.2,545.7 473.8,549.3 474.5,554.0 C475.2,558.7 475.9,563.3 476.5,568.0 C477.1,572.7 477.4,577.3 478.0,582.0 C478.6,586.7 479.2,591.5 480.0,596.0 C480.8,600.5 481.6,606.3 482.8,608.8 C484.0,611.3 485.0,609.8 487.0,611.0 C489.0,612.2 493.4,615.0 494.7,615.8 C489.2,615.8 467.3,615.8 461.8,615.8 C460.8,614.2 458.4,609.3 456.0,606.0 C453.6,602.7 450.4,598.7 447.7,596.0 C445.0,593.3 441.2,592.3 440.0,590.0 C438.8,587.7 440.1,585.2 440.4,582.0 C440.7,578.8 440.6,575.0 442.0,571.0 C443.4,567.0 447.9,560.8 449.0,558.0 C450.1,555.2 449.3,557.0 448.4,554.0 C447.5,551.0 445.2,545.7 443.5,540.0 C441.8,534.3 439.6,525.8 438.0,520.0 C436.4,514.2 435.0,509.3 434.0,505.0 C433.0,500.7 432.3,495.8 432.0,494.0Z" fill="url(#gBR)"/><g clip-path="url(#cbr)"><ellipse cx="452" cy="530" rx="5" ry="30" fill="#eceeee" opacity="0.8" filter="url(#b2)" transform="rotate(-12 452 530)"/><ellipse cx="447" cy="578" rx="5" ry="8" fill="#e4e7e7" opacity="0.8" filter="url(#b2)" transform="rotate(0 447 578)"/><ellipse cx="470" cy="590" rx="6" ry="20" fill="#f0f2f2" opacity="0.6" filter="url(#b2)" transform="rotate(-8 470 590)"/><ellipse cx="448" cy="498" rx="14" ry="3" fill="#e2e5e5" opacity="0.6" filter="url(#b2)" transform="rotate(0 448 498)"/></g>
</g>
</svg>
<div class="g ttl"><span class="t" style="left:10.20px;top:10.00px;font-size:15px;transform-origin:0 0;transform:scaleX(0.7953);">サイズ</span><span class="t" style="left:46.75px;top:10.00px;font-size:15px;letter-spacing:1.250px;">変更</span><span class="t" style="left:79.17px;top:10.00px;transform-origin:0 0;transform:scaleX(0.6919);">_</span><span class="t" style="left:86.00px;top:9.00px;font-size:15px;letter-spacing:-0.050px;">加工</span><span class="t" style="left:117.77px;top:10.00px;transform-origin:0 0;transform:scaleX(0.6703);">_</span><span class="t k" style="left:125.25px;top:11.00px;letter-spacing:-1.000px;">2022</span><span class="t" style="left:158.82px;top:10.00px;font-weight:bold;transform-origin:0 0;transform:scaleX(1.1500);">-</span><span class="t k" style="left:166.25px;top:11.00px;letter-spacing:-1.250px;">10</span><span class="t" style="left:183.82px;top:10.00px;font-weight:bold;transform-origin:0 0;transform:scaleX(1.1500);">-</span><span class="t k" style="left:190.75px;top:11.00px;letter-spacing:-1.350px;">10</span><span class="t" style="left:208.43px;top:10.00px;font-weight:bold;transform-origin:0 0;transform:scaleX(1.1500);">-</span><span class="t k" style="left:215.75px;top:11.00px;letter-spacing:-2.200px;">12</span><span class="t" style="left:232.32px;top:10.00px;font-weight:bold;transform-origin:0 0;transform:scaleX(1.1500);">-</span><span class="t k" style="left:239.75px;top:11.00px;letter-spacing:-2.000px;">16</span><span class="t" style="left:255.82px;top:10.00px;font-weight:bold;transform-origin:0 0;transform:scaleX(1.1500);">-</span><span class="t k" style="left:262.25px;top:11.00px;letter-spacing:-1.000px;">52</span><span class="t" style="left:280.32px;top:10.00px;font-weight:bold;transform-origin:0 0;transform:scaleX(1.1500);">-</span><span class="t k" style="left:286.50px;top:11.00px;letter-spacing:-1.250px;">08</span><span class="t" style="left:303.82px;top:10.00px;font-weight:bold;transform-origin:0 0;transform:scaleX(1.1500);">-</span><span class="t k" style="left:309.75px;top:11.00px;letter-spacing:-0.056px;">1641848159</span><span class="t" style="left:397.32px;top:10.00px;font-weight:bold;transform-origin:0 0;transform:scaleX(1.1500);">-</span><span class="t k" style="left:403.50px;top:11.00px;letter-spacing:-0.531px;">scale9.00</span><span class="t" style="left:467.32px;top:10.00px;font-weight:bold;transform-origin:0 0;transform:scaleX(1.1500);">-</span><span class="t k" style="left:473.25px;top:11.00px;letter-spacing:0.917px;">ddim</span><span class="t" style="left:510.83px;top:10.00px;font-weight:bold;transform-origin:0 0;transform:scaleX(1.1500);">-</span><span class="t k" style="left:517.10px;top:11.00px;letter-spacing:-0.070px;">stable</span><span class="t" style="left:559.33px;top:10.00px;font-weight:bold;transform-origin:0 0;transform:scaleX(1.1500);">-</span><span class="t k" style="left:565.25px;top:11.00px;letter-spacing:0.438px;">diffusion</span><span class="t" style="left:627.53px;top:10.00px;font-weight:bold;transform-origin:0 0;transform:scaleX(1.1500);">-</span><span class="t k" style="left:634.35px;top:11.00px;letter-spacing:-0.042px;">1.4.png</span></div>
<div class="g meta"><span class="t" style="left:749.75px;top:43.00px;letter-spacing:-1.000px;">No </span><span class="t" style="left:772.75px;top:43.00px;letter-spacing:-0.686px;">Metadata </span><span class="t" style="left:838.25px;top:43.00px;letter-spacing:-0.812px;">Found </span><span class="t" style="left:883.30px;top:43.00px;letter-spacing:-0.300px;">in </span><span class="t" style="left:899.00px;top:43.00px;letter-spacing:-0.800px;">Image.</span></div>
<div class="g btn"><span class="t" style="left:919.75px;top:570.00px;letter-spacing:-0.600px;">Use </span><span class="t" style="left:949.95px;top:570.00px;letter-spacing:-0.700px;">as </span><span class="t" style="left:968.50px;top:570.00px;letter-spacing:-0.115px;">Initialization </span><span class="t" style="left:1050.50px;top:570.00px;letter-spacing:-0.688px;">Image</span></div>
<div class="g btn"><span class="t" style="left:906.75px;top:606.00px;letter-spacing:-0.750px;">Load </span><span class="t" style="left:943.85px;top:606.00px;letter-spacing:-0.336px;">Settings </span><span class="t" style="left:1001.75px;top:606.00px;letter-spacing:-0.333px;">From </span><span class="t" style="left:1040.75px;top:606.00px;letter-spacing:-0.500px;">Metadata</span></div>
<div class="g btn"><span class="t" style="left:919.25px;top:641.00px;letter-spacing:-0.417px;">Copy </span><span class="t" style="left:958.35px;top:641.00px;letter-spacing:-0.100px;">Prompt </span><span class="t" style="left:1012.75px;top:641.00px;letter-spacing:-1.000px;">to </span><span class="t" style="left:1029.65px;top:641.00px;letter-spacing:-0.413px;">Clipboard</span></div>
</body></html>
